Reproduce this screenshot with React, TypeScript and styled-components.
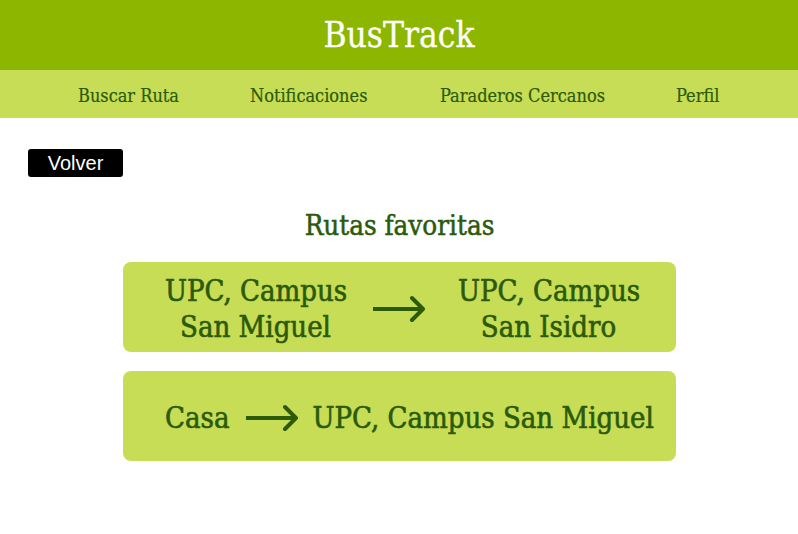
import React from "react";
import styled, { createGlobalStyle } from "styled-components";

const GlobalStyle = createGlobalStyle`
  html, body { margin: 0; padding: 0; background: #ffffff; }
  * { box-sizing: border-box; }
`;

const Page = styled.div`
  width: 798px;
  min-height: 534px;
  font-family: "DejaVu Serif", serif;
  font-stretch: condensed;
`;

const Header = styled.header`
  height: 70px;
  background: #8db600;
  display: flex;
  align-items: center;
  justify-content: center;
`;

const Title = styled.h1`
  margin: 0;
  color: #ffffff;
  font-weight: 400;
  font-size: 35px;
  -webkit-text-stroke: 0.3px #ffffff;
`;

const Nav = styled.nav`
  height: 48px;
  background: #c7dd55;
  display: flex;
  align-items: center;
  padding: 3px 0 0 78px;
`;

const NavItem = styled.a<{ $w: number }>`
  width: ${(p) => p.$w}px;
  color: #2b5a0a;
  font-size: 18px;
  text-decoration: none;
  white-space: nowrap;
  -webkit-text-stroke: 0.2px #2b5a0a;
`;

const Main = styled.main`
  padding: 31px 0 0 28px;
`;

const BackButton = styled.button`
  width: 95px;
  height: 28px;
  background: #000000;
  color: #ffffff;
  border: none;
  border-radius: 3px;
  font-family: "Liberation Sans", Arial, sans-serif;
  font-size: 20px;
  padding: 0;
  display: block;
`;

const Section = styled.section`
  width: 553px;
  margin: 33px 0 0 123px;
  display: flex;
  flex-direction: column;
  align-items: center;
`;

const SectionTitle = styled.h2`
  margin: 0 0 22px;
  color: #2b5a0a;
  font-weight: 400;
  font-size: 27.5px;
  -webkit-text-stroke: 0.5px #2b5a0a;
  height: 30px;
  line-height: 30px;
`;

const Card = styled.div`
  width: 553px;
  height: 90px;
  background: #c7dd55;
  border-radius: 8px;
  display: flex;
  align-items: center;
  margin-bottom: 19px;
  padding: 3px 0 0 42px;
  color: #2b5a0a;
  font-size: 29px;
  font-weight: 400;
  -webkit-text-stroke: 0.6px #2b5a0a;
`;

const Place = styled.div<{ $w: number }>`
  width: ${(p) => p.$w}px;
  text-align: center;
  line-height: 36px;
  white-space: nowrap;
`;

const InlinePlace = styled.div`
  white-space: nowrap;
`;

const ArrowWrap = styled.div<{ $ml: number; $mr: number }>`
  margin: 0 ${(p) => p.$mr}px 0 ${(p) => p.$ml}px;
  display: flex;
  align-items: center;
`;

const Arrow = () => (
  <svg width="54" height="30" viewBox="0 0 54 30">
    <path d="M0 15 H50 M39 4 L50 15 L39 26" stroke="#2d5a06" strokeWidth="4" fill="none" strokeLinecap="round" strokeLinejoin="round" />
  </svg>
);

export default function App() {
  return (
    <Page>
      <GlobalStyle />
      <Header>
        <Title>BusTrack</Title>
      </Header>
      <Nav>
        <NavItem $w={172}>Buscar Ruta</NavItem>
        <NavItem $w={190}>Notificaciones</NavItem>
        <NavItem $w={236}>Paraderos Cercanos</NavItem>
        <NavItem $w={60}>Perfil</NavItem>
      </Nav>
      <Main>
        <BackButton>Volver</BackButton>
      </Main>
      <Section>
        <SectionTitle>Rutas favoritas</SectionTitle>
        <Card>
          <Place $w={181}>UPC, Campus<br />San Miguel</Place>
          <ArrowWrap $ml={27} $mr={31}><Arrow /></ArrowWrap>
          <Place $w={181}>UPC, Campus<br />San Isidro</Place>
        </Card>
        <Card>
          <InlinePlace>Casa</InlinePlace>
          <ArrowWrap $ml={17} $mr={12}><Arrow /></ArrowWrap>
          <InlinePlace>UPC, Campus San Miguel</InlinePlace>
        </Card>
      </Section>
    </Page>
  );
}
